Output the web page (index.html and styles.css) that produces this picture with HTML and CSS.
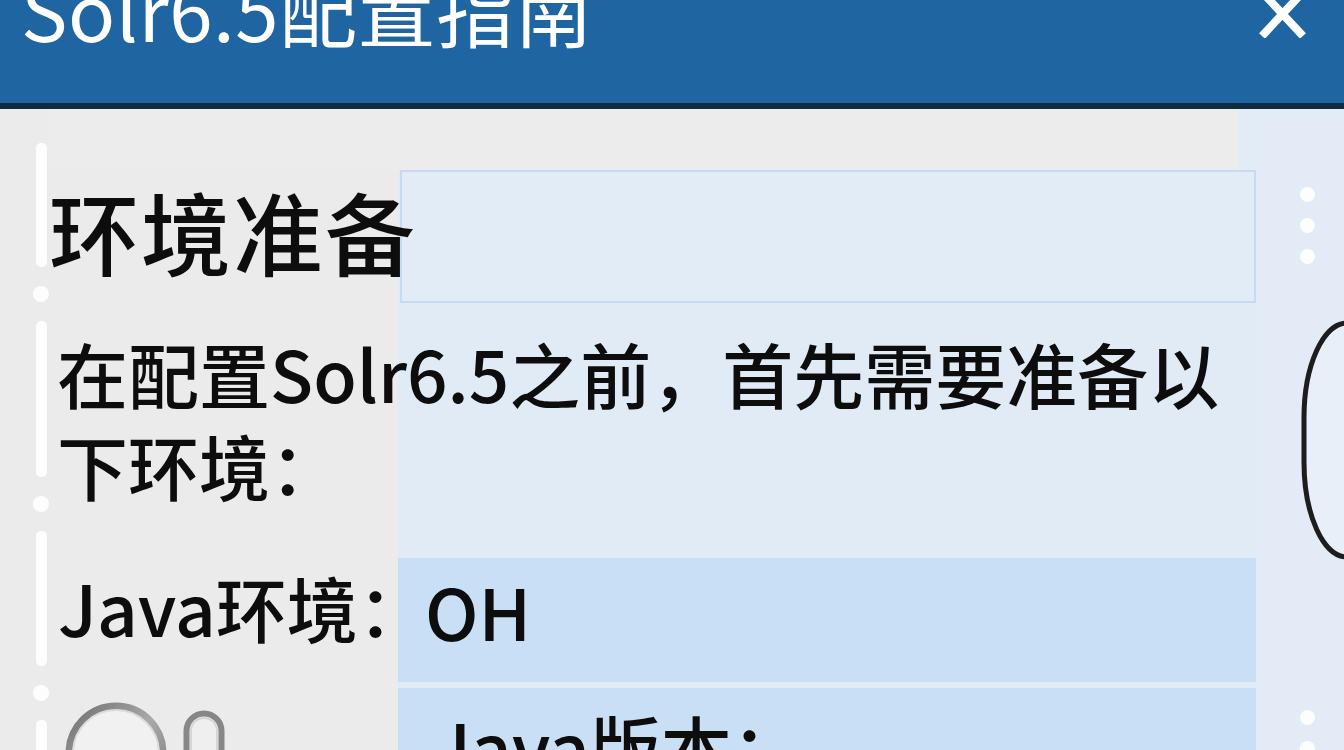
FILE: index.html
```html
<!DOCTYPE html>
<html lang="zh-CN">
<head>
<meta charset="utf-8">
<title>Solr6.5配置指南</title>
<link rel="stylesheet" href="styles.css">
</head>
<body>
<header class="titlebar">
  <h1 class="title">Solr6.5配置指南</h1>
  <button class="close" aria-label="关闭">
    <svg width="49" height="48" viewBox="0 0 49 48"><path d="M4 2 L45 46 M45 2 L4 46" stroke="#fff" stroke-width="8" stroke-linecap="butt" fill="none"/></svg>
  </button>
</header>
<main class="main">
  <div class="rail-left">
    <span class="seg seg-1"></span>
    <span class="dot"></span>
    <span class="seg seg-2"></span>
    <span class="dot"></span>
    <span class="seg seg-3"></span>
    <span class="dot"></span>
    <span class="seg seg-4"></span>
  </div>
  <div class="content">
    <div class="top-strip"></div>
    <section class="heading-row">
      <h2 class="heading">环境准备</h2>
      <div class="heading-box"></div>
    </section>
    <p class="intro">在配置Solr6.5之前，首先需要准备以下环境：</p>
    <div class="field-row">
      <span class="label">Java环境：</span>
      <div class="value">OH</div>
    </div>
    <div class="field-row field-row-2">
      <div class="label icons">
        <svg class="icon-circle" width="106" height="60" viewBox="0 0 106 60">
          <defs>
            <linearGradient id="silver" x1="0" y1="0" x2="1" y2="1">
              <stop offset="0" stop-color="#6f6f6f"/>
              <stop offset="0.5" stop-color="#a9a9a9"/>
              <stop offset="1" stop-color="#7a7a7a"/>
            </linearGradient>
          </defs>
          <circle cx="53" cy="52" r="47" fill="#f1f1f1" stroke="url(#silver)" stroke-width="7"/>
          <circle cx="53" cy="52" r="43" fill="none" stroke="#dadada" stroke-width="2"/>
        </svg>
        <svg class="icon-pill" width="42" height="50" viewBox="0 0 42 50">
          <path d="M3.5 60 L3.5 22 A17.5 17.5 0 0 1 38.5 22 L38.5 60" fill="#efefef" stroke="#878787" stroke-width="6"/>
          <path d="M8 60 L8 22 A13 13 0 0 1 34 22 L34 60" fill="none" stroke="#d6d6d6" stroke-width="2"/>
        </svg>
      </div>
      <div class="value value-2">Java版本：</div>
    </div>
  </div>
  <div class="rail-right">
    <span class="rdot"></span>
    <span class="rdot"></span>
    <span class="rdot"></span>
    <svg class="arc" width="45" height="240" viewBox="0 0 45 240">
      <path d="M46 3 A43 95 0 0 0 3 98 L3 142 A43 95 0 0 0 46 237" fill="#e8eff8" stroke="#1d1d1d" stroke-width="5"/>
    </svg>
    <span class="rdot rdot-low"></span>
    <span class="rdot"></span>
  </div>
</main>
</body>
</html>
```

FILE: styles.css
```css
* { box-sizing: border-box; }

html, body {
  margin: 0;
  padding: 0;
  width: 1344px;
  height: 750px;
  overflow: hidden;
  font-family: "Noto Sans CJK SC", "Noto Sans", sans-serif;
  color: #0d0d0d;
  background: #ebebeb;
}

.titlebar {
  height: 109px;
  background: #1e65a1;
  border-bottom: 6px solid #102a40;
  display: flex;
  align-items: flex-start;
  justify-content: space-between;
  overflow: hidden;
}

.title {
  margin: -31px 0 0 21px;
  font-size: 78px;
  line-height: 78px;
  font-weight: 400;
  color: #fff;
  letter-spacing: 0.5px;
}

.close {
  margin: -10px 37px 0 0;
  padding: 0;
  border: 0;
  background: none;
  width: 49px;
  height: 48px;
  display: block;
}
.close svg { display: block; }

.main {
  display: flex;
  height: 641px;
  overflow: hidden;
}

/* left decorative rail */
.rail-left {
  width: 49px;
  flex: none;
  background: #ebebeb;
  padding: 34px 0 0 33px;
  display: flex;
  flex-direction: column;
  align-items: center;
  gap: 19px;
}
.rail-left > * { flex: none; }
.seg {
  width: 11px;
  background: #fdfdfd;
  border-radius: 5px;
}
.seg-1 { height: 124px; }
.seg-2 { height: 156px; }
.seg-3 { height: 135px; }
.seg-4 { height: 60px; }
.dot {
  width: 16px;
  height: 16px;
  border-radius: 50%;
  background: #fdfdfd;
}

/* main content */
.content {
  width: 1207px;
  flex: none;
  display: flex;
  flex-direction: column;
  background: linear-gradient(to right, #ebebeb 349px, #e1ebf6 349px);
}

.top-strip {
  height: 61px;
  flex: none;
  background: linear-gradient(to right, #ececec calc(100% - 18px), #e2ecf6 calc(100% - 18px));
}

.heading-row {
  height: 133px;
  flex: none;
  display: grid;
  grid-template-columns: 349px 1fr;
  align-items: stretch;
}
.heading {
  position: relative;
  z-index: 1;
  margin: -6px 0 0 0;
  font-size: 90px;
  line-height: 133px;
  font-weight: 500;
  white-space: nowrap;
  letter-spacing: 2px;
}
.heading-box {
  margin-left: 2px;
  background: #e1ecf7;
  border: 2px solid #c6daf0;
}

.intro {
  margin: 0;
  height: 255px;
  flex: none;
  padding: 23px 0 0 8px;
  font-size: 71px;
  line-height: 92px;
  font-weight: 500;
}

.field-row {
  height: 124px;
  flex: none;
  display: grid;
  grid-template-columns: 349px 1fr;
}
.field-row-2 {
  margin-top: 6px;
  height: 80px;
}
.label {
  padding: 0 0 0 9px;
  font-size: 71px;
  line-height: 96px;
  font-weight: 500;
  white-space: nowrap;
}
.value {
  background: #c9dff5;
  padding-left: 27px;
  font-size: 71px;
  line-height: 104px;
  font-weight: 500;
}
.value-2 {
  padding-left: 34px;
  line-height: 114px;
}

.icons {
  display: flex;
  align-items: flex-start;
  padding-left: 14px;
  gap: 14px;
}
.icon-circle { margin-top: 13px; display: block; }
.icon-pill { margin-top: 21px; display: block; }

/* right rail */
.rail-right {
  width: 88px;
  flex: none;
  background: #e3ecf6;
  display: flex;
  flex-direction: column;
  align-items: flex-start;
  padding: 78px 0 0 44px;
  gap: 16px;
  overflow: hidden;
}
.rail-right > * { flex: none; }
.rdot {
  width: 15px;
  height: 15px;
  border-radius: 50%;
  background: #fdfdfd;
}
.arc {
  display: block;
  margin: 40px 0 0 1px;
}
.rdot-low { margin-top: 134px; }
```
